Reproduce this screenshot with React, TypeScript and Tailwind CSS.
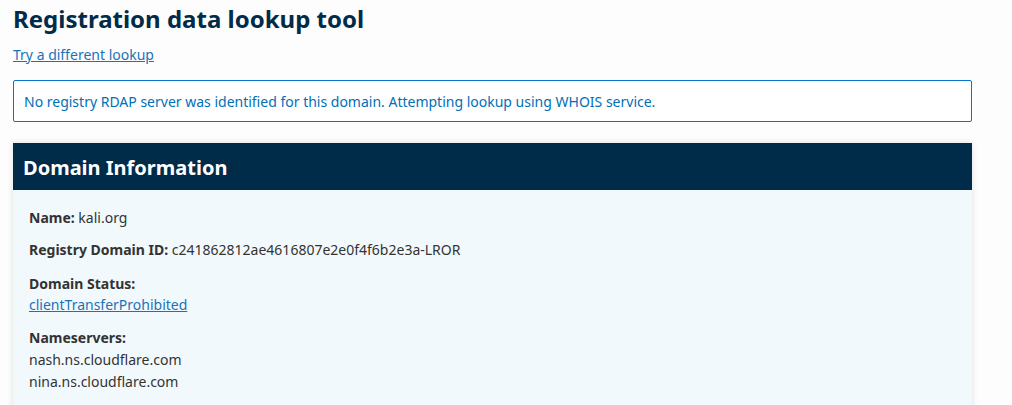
import React from "react";

const rows = [
  { label: "Name:", value: "kali.org" },
  { label: "Registry Domain ID:", value: "c241862812ae4616807e2e0f4f6b2e3a-LROR" },
];

export default function App() {
  return (
    <div className="min-h-screen bg-[#fdfdfd] font-['Noto_Sans',sans-serif] text-[#333]">
      <main className="w-[959px] ml-[13px] pt-[3px]">
        <h1 className="text-[24px] leading-[32px] font-bold text-[#002b49]">Registration data lookup tool</h1>

        <a href="#" className="block mt-[10px] text-[14px] leading-[20px] text-[#1a73b8] underline">
          Try a different lookup
        </a>

        {/* WHOIS fallback notice */}
        <div className="mt-[15px] h-[42px] flex items-center px-[10px] border border-[#0077c8] rounded-[2px] bg-white text-[14px] text-[#0070b8]">
          No registry RDAP server was identified for this domain. Attempting lookup using WHOIS service.
        </div>

        <section className="mt-[21px] shadow-[0_0_6px_rgba(0,0,0,0.12)]">
          <div className="h-[47px] flex items-center px-[10px] pt-[2px] bg-[#002b49]">
            <h2 className="text-[20px] font-bold text-white">Domain Information</h2>
          </div>
          <div className="bg-[#f2f9fd] px-[16px] pt-[17px] pb-[20px] text-[14px] leading-[22px]">
            {rows.map((r, i) => (
              <p key={r.label} className={i === 0 ? "mb-[10px]" : "mb-[12px]"}>
                <span className="font-bold">{r.label}</span> {r.value}
              </p>
            ))}
            <div className="mb-[12px] leading-[21px]">
              <p className="font-bold">Domain Status:</p>
              <a href="#" className="text-[#1a73b8] underline">clientTransferProhibited</a>
            </div>
            <div>
              <p className="font-bold">Nameservers:</p>
              <p>nash.ns.cloudflare.com</p>
              <p>nina.ns.cloudflare.com</p>
            </div>
          </div>
        </section>
      </main>
    </div>
  );
}
